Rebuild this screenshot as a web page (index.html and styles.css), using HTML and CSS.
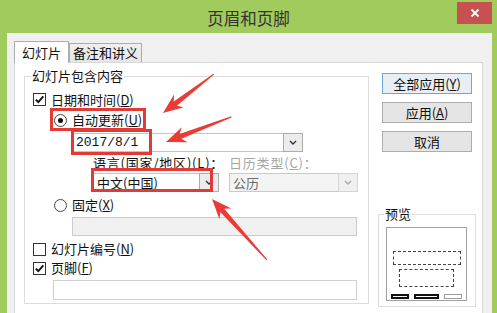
FILE: index.html
```html
<!DOCTYPE html>
<html lang="zh-CN">
<head>
<meta charset="utf-8">
<title>页眉和页脚</title>
<link rel="stylesheet" href="styles.css">
</head>
<body>
<div class="window">
  <div class="titlebar">
    <div class="title">页眉和页脚</div>
    <div class="close"><svg width="10" height="10" viewBox="0 0 10 10"><path d="M1.5 1.5L8.5 8.5M8.5 1.5L1.5 8.5" stroke="#fff" stroke-width="1.8" fill="none"/></svg></div>
  </div>
  <div class="client">
    <div class="tabs">
      <div class="tab active">幻灯片</div>
      <div class="tab">备注和讲义</div>
    </div>
    <div class="panel">
      <div class="left">
        <fieldset class="group main">
          <legend>幻灯片包含内容</legend>
          <div class="row r-date">
            <span class="check"><svg width="11" height="11" viewBox="0 0 11 11"><path d="M1.8 5.6L4.3 8.2L9.3 2.4" stroke="#111" stroke-width="1.9" fill="none"/></svg></span>
            <span>日期和时间(<u>D</u>)</span>
          </div>
          <div class="row r-auto indent">
            <span class="radio on"></span>
            <span>自动更新(<u>U</u>)</span>
          </div>
          <div class="combo r-datebox">
            <span class="val mono">2017/8/1</span>
            <span class="drop"><svg width="8" height="5" viewBox="0 0 8 5"><path d="M1 1L4 4L7 1" stroke="#333" stroke-width="1.4" fill="none"/></svg></span>
          </div>
          <div class="lang-grid">
            <span class="lbl">语言(国家/地区)(<u>L</u>)：</span>
            <span class="lbl disabled">日历类型(<u>C</u>)：</span>
            <div class="combo">
              <span class="val">中文(中国)</span>
              <span class="drop"><svg width="8" height="5" viewBox="0 0 8 5"><path d="M1 1L4 4L7 1" stroke="#333" stroke-width="1.4" fill="none"/></svg></span>
            </div>
            <div class="combo disabled">
              <span class="val">公历</span>
              <span class="drop"><svg width="8" height="5" viewBox="0 0 8 5"><path d="M1 1L4 4L7 1" stroke="#a8a8a8" stroke-width="1.4" fill="none"/></svg></span>
            </div>
          </div>
          <div class="row r-fixed indent">
            <span class="radio"></span>
            <span>固定(<u>X</u>)</span>
          </div>
          <div class="field disabled r-fixedbox"></div>
          <div class="row r-num">
            <span class="check"></span>
            <span>幻灯片编号(<u>N</u>)</span>
          </div>
          <div class="row r-foot">
            <span class="check"><svg width="11" height="11" viewBox="0 0 11 11"><path d="M1.8 5.6L4.3 8.2L9.3 2.4" stroke="#111" stroke-width="1.9" fill="none"/></svg></span>
            <span>页脚(<u>F</u>)</span>
          </div>
          <div class="field r-footbox"></div>
        </fieldset>
        <div class="row r-title">
          <span class="check"></span>
          <span>标题幻灯片中不显示(<u>S</u>)</span>
        </div>
      </div>
      <div class="side">
        <div class="btn default">全部应用(<u>Y</u>)</div>
        <div class="btn">应用(<u>A</u>)</div>
        <div class="btn">取消</div>
        <fieldset class="group preview">
          <legend>预览</legend>
          <div class="pv-box">
            <div class="pv-rect pv-r1"></div>
            <div class="pv-rect pv-r2"></div>
            <div class="pv-bars">
              <span class="bar dark"></span>
              <span class="bar dark wide"></span>
              <span class="bar light"></span>
            </div>
          </div>
        </fieldset>
      </div>
    </div>
  </div>
  <div class="annot">
    <div class="mark m1"></div>
    <div class="mark m2"></div>
    <div class="mark m3"></div>
    <svg class="arrows" width="497" height="313" viewBox="0 0 497 313">
      <polygon transform="translate(163 113) rotate(-37.4)" points="0,0 20,-8 15.5,-2.6 64,-0.6 64,0.6 15.5,2.6 20,8"/>
      <polygon transform="translate(166 142) rotate(-21)" points="0,0 20,-8 15.5,-2.6 70,-0.6 70,0.6 15.5,2.6 20,8"/>
      <polygon transform="translate(212 199) rotate(48)" points="0,0 20,-8 15.5,-2.6 82,-0.6 82,0.6 15.5,2.6 20,8"/>
    </svg>
  </div>
</div>
</body>
</html>
```
FILE: styles.css
```css
* { box-sizing: border-box; }
html, body { margin: 0; padding: 0; }
body {
  width: 497px;
  height: 313px;
  overflow: hidden;
  background: #a2cb5e;
  font-family: "Noto Sans CJK SC", "Microsoft YaHei", sans-serif;
  font-size: 13px;
  line-height: 16px;
  color: #111;
}
u { text-decoration: underline; text-underline-offset: 1px; }

.window {
  position: relative;
  width: 497px;
  height: 313px;
  display: flex;
  flex-direction: column;
}

/* title bar */
.titlebar {
  height: 33px;
  flex: none;
  display: grid;
  grid-template-columns: 1fr auto 1fr;
  align-items: start;
}
.title {
  grid-column: 2;
  margin-top: 8px;
  font-size: 16.5px;
  line-height: 20px;
  color: #333;
}
.close {
  grid-column: 3;
  justify-self: end;
  margin: 2px 5px 0 0;
  width: 35px;
  height: 22px;
  background: #c75050;
  display: flex;
  align-items: center;
  justify-content: center;
}

/* client area */
.client {
  flex: 1;
  margin: 0 5px 0 7px;
  background: #f0f0f0;
  padding: 8px 9px 0 7px;
  display: flex;
  flex-direction: column;
  min-height: 0;
}
.tabs {
  display: flex;
  align-items: flex-end;
  height: 21px;
  flex: none;
}
.tab {
  height: 19px;
  padding: 0 3px;
  border: 1px solid #acacac;
  border-bottom: none;
  background: linear-gradient(#f0f0f0, #e5e5e5);
  line-height: 18px;
  white-space: nowrap;
}
.tab.active {
  height: 22px;
  margin-bottom: -1px;
  padding: 0 7px;
  background: #fff;
  line-height: 21px;
  position: relative;
  z-index: 1;
}
.panel {
  flex: 1;
  background: #fff;
  border: 1px solid #d9d9d9;
  display: grid;
  grid-template-columns: 345px 98px;
  column-gap: 9px;
  align-items: start;
  padding: 5px 0 0 9px;
}

/* group boxes */
.group {
  margin: 0;
  min-width: 0;
  border: 1px solid #dcdcdc;
}
.group legend {
  padding: 0 1px;
  margin-left: -2px;
  line-height: 16px;
}
.main {
  width: 345px;
  padding: 6px 11px 3px 8px;
}
.left { display: flex; flex-direction: column; }

.row {
  display: flex;
  align-items: center;
  height: 18px;
  white-space: nowrap;
}
.indent { padding-left: 21px; }
.r-date { height: 19px; }
.r-auto { height: 20px; margin-top: 1px; }
.r-fixed { margin-top: 4px; }
.r-num { margin-top: 4px; }
.r-foot { margin-top: 1px; }
.r-title { margin-top: 6px; }

.check {
  width: 13px;
  height: 13px;
  border: 1px solid #333;
  background: #fff;
  margin-right: 5px;
  flex: none;
  display: flex;
}
.radio {
  width: 13px;
  height: 13px;
  border: 1px solid #444;
  border-radius: 50%;
  background: #fff;
  margin-right: 5px;
  flex: none;
  display: flex;
  align-items: center;
  justify-content: center;
}
.radio.on::after {
  content: "";
  width: 5px;
  height: 5px;
  border-radius: 50%;
  background: #111;
}

/* combos and fields */
.combo {
  display: flex;
  align-items: center;
  height: 19px;
  border: 1px solid #c4c4c4;
  background: #fff;
}
.combo .val {
  flex: 1;
  padding-left: 3px;
  white-space: nowrap;
}
.mono {
  font-family: "Liberation Mono", monospace;
  font-size: 13px;
}
.drop {
  flex: none;
  width: 20px;
  align-self: stretch;
  margin: -1px -1px -1px 0;
  border: 1px solid #acacac;
  background: #ececec;
  display: flex;
  align-items: center;
  justify-content: center;
}
.combo.disabled {
  background: #f4f4f4;
  border-color: #c3cad3;
  color: #6d6d6d;
}
.combo.disabled .drop {
  border-color: #d4d4d4;
  background: #f0f0f0;
}
.r-datebox {
  margin-top: 3px;
  margin-left: 39px;
  width: 231px;
}
.lang-grid {
  display: grid;
  grid-template-columns: 126px 129px;
  grid-template-rows: 16px 19px;
  column-gap: 10px;
  row-gap: 2px;
  margin-top: 3px;
  margin-left: 60px;
}
.lbl { white-space: nowrap; letter-spacing: 0.8px; }
.lbl.disabled { color: #a6a6a6; }

.field {
  border: 1px solid #cfcfcf;
  background: #fff;
}
.field.disabled {
  background: #f0f0f0;
  border-color: #c6ccd4;
}
.r-fixedbox {
  margin-top: 3px;
  margin-left: 39px;
  width: 285px;
  height: 19px;
}
.r-footbox {
  margin-top: 3px;
  margin-left: 20px;
  width: 304px;
  height: 20px;
}

/* right side */
.side {
  display: flex;
  flex-direction: column;
  padding-top: 5px;
  gap: 8px;
}
.btn {
  margin-left: 4px;
  width: 90px;
  height: 21px;
  border: 1px solid #adadad;
  background: #e5e5e5;
  display: flex;
  align-items: center;
  justify-content: center;
  white-space: nowrap;
}
.btn.default {
  border-color: #6fa6dc;
  background: #e8eef4;
}
.preview {
  margin-top: 46px;
  width: 98px;
  padding: 5px 8px 5px 7px;
}
.pv-box {
  width: 81px;
  height: 74px;
  border: 1px solid #a0a0a0;
  background: #fff;
  display: flex;
  flex-direction: column;
  align-items: center;
  padding-top: 23px;
}
.pv-rect {
  border: 1px dashed #444;
}
.pv-r1 { width: 68px; height: 14px; }
.pv-r2 { width: 55px; height: 18px; margin-top: 4px; }
.pv-bars {
  display: flex;
  gap: 5px;
  margin-top: 7px;
}
.bar {
  width: 18px;
  height: 5px;
  background: #fff;
}
.bar.dark { border: 2px solid #111; }
.bar.wide { width: 25px; }
.bar.light { border: 1px solid #9a9a9a; }

/* annotations drawn over the screenshot */
.annot {
  position: absolute;
  inset: 0;
  pointer-events: none;
}
.mark {
  position: absolute;
  border: 3px solid #e23b36;
}
.m1 { left: 50px; top: 108px; width: 96px; height: 23px; }
.m2 { left: 71px; top: 129px; width: 81px; height: 26px; }
.m3 { left: 91px; top: 168px; width: 122px; height: 24px; }
.arrows {
  position: absolute;
  left: 0;
  top: 0;
  fill: #eb3b35;
}
```
